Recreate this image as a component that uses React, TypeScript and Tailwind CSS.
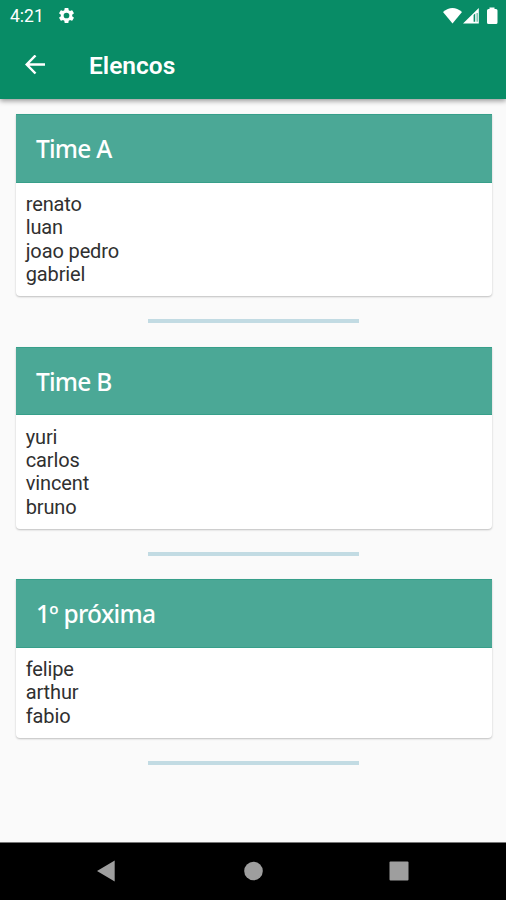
import React from "react";

const teams = [
  { title: "Time A", spacing: "tracking-[-0.75px]", players: ["renato", "luan", "joao pedro", "gabriel"] },
  { title: "Time B", spacing: "tracking-[-0.75px]", players: ["yuri", "carlos", "vincent", "bruno"] },
  { title: "1º próxima", spacing: "tracking-[-0.7px]", players: ["felipe", "arthur", "fabio"] },
];

function StatusBar() {
  return (
    <div className="flex h-8 items-center pl-[10px] pr-[7px] text-white">
      <span className="text-[17.5px] leading-8">4:21</span>
      <svg className="relative -top-px ml-[13px] size-[19px]" viewBox="0 0 24 24" fill="currentColor">
        <path d="M19.14 12.94c.04-.3.06-.61.06-.94s-.02-.64-.07-.94l2.03-1.58a.49.49 0 0 0 .12-.61l-1.92-3.32a.49.49 0 0 0-.59-.22l-2.39.96a7 7 0 0 0-1.62-.94L14.4 2.81a.48.48 0 0 0-.48-.41h-3.84a.47.47 0 0 0-.47.41l-.36 2.54c-.59.24-1.13.57-1.62.94l-2.39-.96a.48.48 0 0 0-.59.22L2.74 8.87a.47.47 0 0 0 .12.61l2.03 1.58a7 7 0 0 0 0 1.88l-2.03 1.58a.49.49 0 0 0-.12.61l1.92 3.32c.12.22.37.29.59.22l2.39-.96c.5.38 1.03.7 1.62.94l.36 2.54c.05.24.24.41.48.41h3.84c.24 0 .44-.17.47-.41l.36-2.54c.59-.24 1.13-.56 1.62-.94l2.39.96c.22.08.47 0 .59-.22l1.92-3.32a.47.47 0 0 0-.12-.61zM12 15.6A3.6 3.6 0 1 1 12 8.400a3.600 3.600 0 0 1 0 7.200z" />
      </svg>
      <svg className="relative -top-px ml-auto h-[17px] w-[56px]" viewBox="443 6 56 17" fill="currentColor">
        <path d="M443 11Q452.500 3 462 11L452.500 22.500Z" />
        <path fillRule="evenodd" d="M463 22.500L478.800 7V22.500ZM473.600 14V20.700H475.200V12.500ZM476.700 12V20.700H477.500V12Z" />
        <path d="M489.500 6.500H494.500V8H496Q497.500 8 497.500 9.500V21.500Q497.500 23 496 23H488.500Q487 23 487 21.500V9.500Q487 8 488.500 8H489.500Z" />
      </svg>
    </div>
  );
}

function TeamCard({ team }: { team: (typeof teams)[number] }) {
  return (
    <section className="flex flex-col items-center">
      <div className="w-full rounded-b-[4px] bg-white shadow-[0_1px_2px_rgba(0,0,0,0.24)]">
        <h2
          className={`flex h-[68.500px] items-center border-y border-[#379f8a] bg-[#4ba896] pl-[20.400px] pt-[3px] font-['Noto_Sans',sans-serif] text-[24.500px] font-medium text-white ${team.spacing}`}
        >
          {team.title}
        </h2>
        <ul className="pb-[9.500px] pl-[10.200px] pt-[10.500px] text-[20px] leading-[23.400px] tracking-[-0.12px] text-[#303030]">
          {team.players.map((player) => (
            <li key={player}>{player}</li>
          ))}
        </ul>
      </div>
      <div className="mb-[23.200px] mt-[23.200px] h-[4px] w-[211px] bg-[#c2dbe3]" />
    </section>
  );
}

export default function App() {
  return (
    <div className="flex h-[900px] w-[506px] flex-col overflow-hidden bg-[#fafafa] font-[Roboto,sans-serif]">
      <header className="relative h-[98.500px] shrink-0 bg-[#088c66] text-white shadow-[0_2px_5px_rgba(0,0,0,0.4)]">
        <StatusBar />
        <div className="flex h-[66px] items-center pl-[25px]">
          <svg className="h-[20px] w-[20px]" viewBox="0 0 20 20" fill="none" stroke="currentColor" strokeWidth="2.500">
            <path d="M20 9.500H2M10.500 .500L1.700 9.500L10.500 18.500" />
          </svg>
          <h1 className="ml-[44px] pt-[2px] text-[24.500px] font-semibold">Elencos</h1>
        </div>
      </header>
      <main className="flex-1 pl-[15.500px] pr-[14.500px] pt-[15.500px]">
        {teams.map((team) => (
          <TeamCard key={team.title} team={team} />
        ))}
      </main>
      <nav className="flex h-[58px] shrink-0 border-t border-[#777] bg-black text-[#9e9e9e]">
        <svg className="h-[57px] w-full" viewBox="0 0 506 57" fill="currentColor">
          <path d="M97 28L114.700 17.500V38.500Z" />
          <circle cx="253.500" cy="28" r="9.300" />
          <rect x="389.500" y="18.500" width="19" height="19" rx="1" />
        </svg>
      </nav>
    </div>
  );
}
